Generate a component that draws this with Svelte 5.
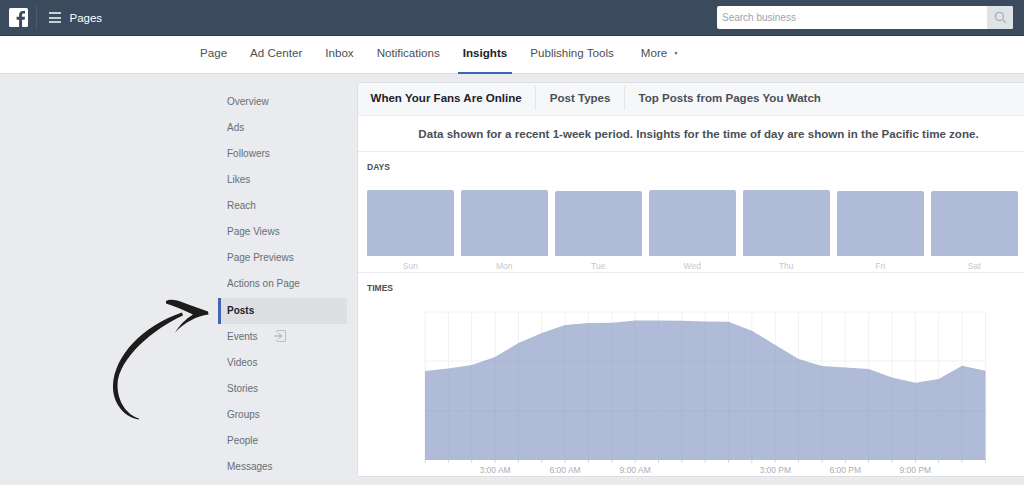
<script lang="ts">
    const navItems = ["Page", "Ad Center", "Inbox", "Notifications", "Insights", "Publishing Tools"];
    const sideItems = [
        "Overview", "Ads", "Followers", "Likes", "Reach", "Page Views", "Page Previews",
        "Actions on Page", "Posts", "Events", "Videos", "Stories", "Groups", "People", "Messages"
    ];
    const days = [
        { name: "Sun", height: 66 },
        { name: "Mon", height: 66 },
        { name: "Tue", height: 65.500 },
        { name: "Wed", height: 66.500 },
        { name: "Thu", height: 66 },
        { name: "Fri", height: 65 },
        { name: "Sat", height: 65 }
    ];

    // Chart coordinates: one step per hour, starts at x = 0 inside the svg.
    const step = 23.35;
    const chartBottom = 148;
    const values = [
        59, 56.5, 53, 45, 31, 21, 13, 11, 10.7, 8.4, 8.6, 8.8, 9.5, 9.8, 18.7, 33, 47,
        54, 55.4, 57, 65.4, 70.8, 67, 53.8, 58.8
    ];
    const area =
        `M0 ${chartBottom} ` +
        values.map((v, i) => `L${(i * step).toFixed(1)} ${v}`).join(" ") +
        ` L${(24 * step).toFixed(1)} ${chartBottom} Z`;
    const hours = [
        { i: 3, label: "3:00 AM" },
        { i: 6, label: "6:00 AM" },
        { i: 9, label: "9:00 AM" },
        { i: 15, label: "3:00 PM" },
        { i: 18, label: "6:00 PM" },
        { i: 21, label: "9:00 PM" }
    ];
</script>

<div class="page">
    <header class="topbar">
        <svg class="logo" viewBox="0 0 19 19" width="19" height="19">
            <rect width="19" height="19" rx="1.5" fill="#fff" />
            <path
                d="M13.1 19v-7.3h2.5l.4-2.9h-2.9V7c0-.8.2-1.4 1.4-1.4H16V3c-.3 0-1.2-.1-2.2-.1-2.2 0-3.700 1.300-3.700 3.800v2.100H7.600v2.900h2.500V19z"
                fill="#3b4a5c"
            />
        </svg>
        <span class="divider"></span>
        <span class="burger"><i></i><i></i><i></i></span>
        <span class="brand">Pages</span>
        <div class="search">
            <span class="placeholder">Search business</span>
            <span class="search-btn">
                <svg viewBox="0 0 14 14" width="13" height="13" fill="none" stroke="#a3a9b1" stroke-width="1.2">
                    <circle cx="5.800" cy="5.800" r="4.400" />
                    <path d="M9 9l3.800 3.800" />
                </svg>
            </span>
        </div>
    </header>

    <nav class="subnav">
        {#each navItems as item}
            <span class="nav-item" class:active={item === "Insights"}>{item}</span>
        {/each}
        <span class="nav-item more">More <b>▼</b></span>
    </nav>

    <main class="content">
        <aside class="sidebar">
            {#each sideItems as item}
                <div class="side-item" class:current={item === "Posts"}>
                    {item}
                    {#if item === "Events"}
                        <svg class="promo" viewBox="0 0 12 12" width="12" height="12" fill="none" stroke="#bcc0c7">
                            <path d="M3 3V.5h8.500v11H3V9" />
                            <path d="M0 6h7M5 3.500L7.500 6 5 8.500" stroke-width="1.400" />
                        </svg>
                    {/if}
                </div>
            {/each}
        </aside>

        <section class="card">
            <div class="tabs">
                <span class="tab selected">When Your Fans Are Online</span>
                <span class="tab">Post Types</span>
                <span class="tab">Top Posts from Pages You Watch</span>
            </div>
            <p class="notice">Data shown for a recent 1-week period. Insights for the time of day are shown in the Pacific time zone.</p>

            <div class="block days">
                <h4>DAYS</h4>
                <div class="bars">
                    {#each days as day}
                        <div class="day">
                            <div class="plot"><div class="bar" style="height: {day.height}px"></div></div>
                            <span>{day.name}</span>
                        </div>
                    {/each}
                </div>
            </div>

            <div class="block times">
                <h4>TIMES</h4>
                <svg class="chart" width="570" height="170" viewBox="-1 -1 570 170">
                    <defs>
                        <clipPath id="area-clip"><path d={area} /></clipPath>
                    </defs>
                    {#each values as _, i}
                        <line x1={i * step} x2={i * step} y1="0" y2={chartBottom} stroke="#f0f1f4" />
                        <line x1={i * step} x2={i * step} y1={chartBottom} y2={chartBottom + 3} stroke="#d5d8dd" />
                    {/each}
                    <line x1="0" x2={24 * step} y1="0" y2="0" stroke="#f0f1f4" />
                    <line x1="0" x2={24 * step} y1="49" y2="49" stroke="#f0f1f4" />
                    <path d={area} fill="#b0bcd7" />
                    <g clip-path="url(#area-clip)">
                        {#each values as _, i}
                            <line x1={i * step} x2={i * step} y1="0" y2={chartBottom} stroke="#a6b3cf" stroke-opacity="0.5" />
                        {/each}
                        <line x1="0" x2={24 * step} y1="49" y2="49" stroke="#a6b3cf" stroke-opacity="0.6" />
                        <line x1="0" x2={24 * step} y1="99" y2="99" stroke="#a6b3cf" stroke-opacity="0.7" />
                    </g>
                    {#each hours as hour}
                        <text x={hour.i * step} y="161" text-anchor="middle">{hour.label}</text>
                    {/each}
                </svg>
            </div>
        </section>
    </main>

    <!-- hand drawn arrow lying over the sidebar -->
    <svg class="arrow" viewBox="0 0 110 125" width="110" height="125">
        <path
            d="M32 121.500C18 120 5 105 6 87 7.500 58 35 28 75 14.500L76 17.500C48 30 11 60 10.500 87 10.500 104 20 117 32 120.500z"
            fill="#1d1c1a"
        />
        <path
            d="M59 3C63 .5 70 1.500 80 6L101 13.500 101.500 16.500C90 18 78 24 68 34.500 73 27 78 21.500 86 16.500 76 12 68 8 59 5.500z"
            fill="#1d1c1a"
        />
    </svg>
</div>

<style>
    :global(body) {
        background: #e9ebee;
        font-family: "Liberation Sans", Arial, sans-serif;
    }

    .page {
        position: relative;
        width: 1024px;
        height: 485px;
        overflow: hidden;
    }

    .topbar {
        height: 35px;
        background: #3b4a5c;
        border-bottom: 1px solid #2f3c4b;
        display: flex;
        align-items: center;
        padding: 0 11px 0 9px;
    }

    .logo {
        flex: none;
    }

    .divider {
        width: 1px;
        height: 23px;
        background: #4c5b6d;
        margin: 0 12px 0 7.500px;
    }

    .burger {
        display: flex;
        flex-direction: column;
        gap: 2.500px;
        width: 12px;
        margin-right: 9px;
    }

    .burger i {
        height: 2px;
        background: #c9cfd6;
    }

    .brand {
        color: #fff;
        font-size: 11.500px;
    }

    .search {
        margin-left: auto;
        width: 296px;
        height: 23px;
        background: #fff;
        border-radius: 2px;
        display: flex;
        align-items: center;
        overflow: hidden;
    }

    .placeholder {
        flex: 1;
        padding-left: 5px;
        font-size: 10px;
        color: #a0a4ab;
    }

    .search-btn {
        width: 26px;
        height: 23px;
        background: #dfe3e8;
        display: flex;
        align-items: center;
        justify-content: center;
    }

    .subnav {
        height: 38px;
        background: #fff;
        border-bottom: 1px solid #dddfe2;
        box-sizing: border-box;
        display: flex;
        padding-left: 188.500px;
    }

    .nav-item {
        padding: 0 5px;
        margin: 0 6.500px;
        line-height: 33px;
        font-size: 11.600px;
        color: #4b4f56;
    }

    .nav-item.active {
        font-weight: bold;
        color: #1d2129;
        border-bottom: 2px solid #4267b2;
        height: 36px;
    }

    .more {
        margin-left: 10.500px;
    }

    .more b {
        font-size: 5px;
        vertical-align: 2px;
        margin-left: 3px;
        font-weight: normal;
    }

    .content {
        display: flex;
        align-items: flex-start;
        padding: 8px 0 0 218px;
    }

    .sidebar {
        width: 129px;
        margin-right: 9.500px;
        padding-top: 6.500px;
        flex: none;
    }

    .side-item {
        height: 26.150px;
        line-height: 26.150px;
        padding-left: 9px;
        font-size: 10px;
        color: #686d75;
    }

    .side-item.current {
        box-sizing: border-box;
        padding-left: 6px;
        border-left: 3px solid #4267b2;
        background: #dddfe3;
        font-weight: bold;
        color: #1d2129;
    }

    .promo {
        margin-left: 14px;
        vertical-align: -2px;
    }

    .card {
        flex: none;
        width: 684px;
        height: 395px;
        box-sizing: border-box;
        background: #fff;
        border: 1px solid #dddfe2;
        border-radius: 2px;
    }

    .tabs {
        height: 32px;
        box-sizing: content-box;
        background: #f6f7f9;
        border-bottom: 1px solid #e9ebee;
        display: flex;
        align-items: center;
        padding-left: 13px;
    }

    .tab {
        font-size: 11.550px;
        font-weight: bold;
        color: #4b4f56;
        padding-right: 13.500px;
        margin-right: 13.500px;
        border-right: 1px solid #e3e5e8;
        line-height: 24px;
        margin-bottom: 2px;
    }

    .tab:last-child {
        border-right: 0;
    }

    .tab.selected {
        color: #1d2129;
    }

    .notice {
        margin: 0;
        height: 36px;
        line-height: 36px;
        text-align: center;
        font-size: 11.570px;
        font-weight: bold;
        color: #4b4f56;
        border-bottom: 1px solid #e9ebee;
        box-sizing: border-box;
    }

    .block {
        padding-left: 9.500px;
    }

    .block h4 {
        margin: 0;
        font-size: 8.500px;
        color: #4b4f56;
    }

    .days {
        height: 121px;
        box-sizing: border-box;
        padding-top: 10px;
        padding-right: 22px;
        border-bottom: 1px solid #e9ebee;
    }

    .bars {
        display: grid;
        grid-template-columns: repeat(7, 1fr);
        gap: 7.300px;
        margin-top: 17px;
    }

    .day {
        text-align: center;
        font-size: 8.500px;
        color: #c4c8ce;
    }

    .plot {
        height: 67px;
        display: flex;
        align-items: flex-end;
        margin-bottom: 5px;
    }

    .bar {
        width: 100%;
        background: #b0bcd7;
        border-radius: 2px 2px 0 0;
    }

    .times {
        padding-top: 10px;
    }

    .chart {
        display: block;
        margin: 18px 0 0 57px;
    }

    .chart text {
        font-size: 8.500px;
        fill: #a9afb7;
        font-family: "Liberation Sans", Arial, sans-serif;
    }

    .arrow {
        position: absolute;
        left: 107px;
        top: 298px;
    }
</style>
